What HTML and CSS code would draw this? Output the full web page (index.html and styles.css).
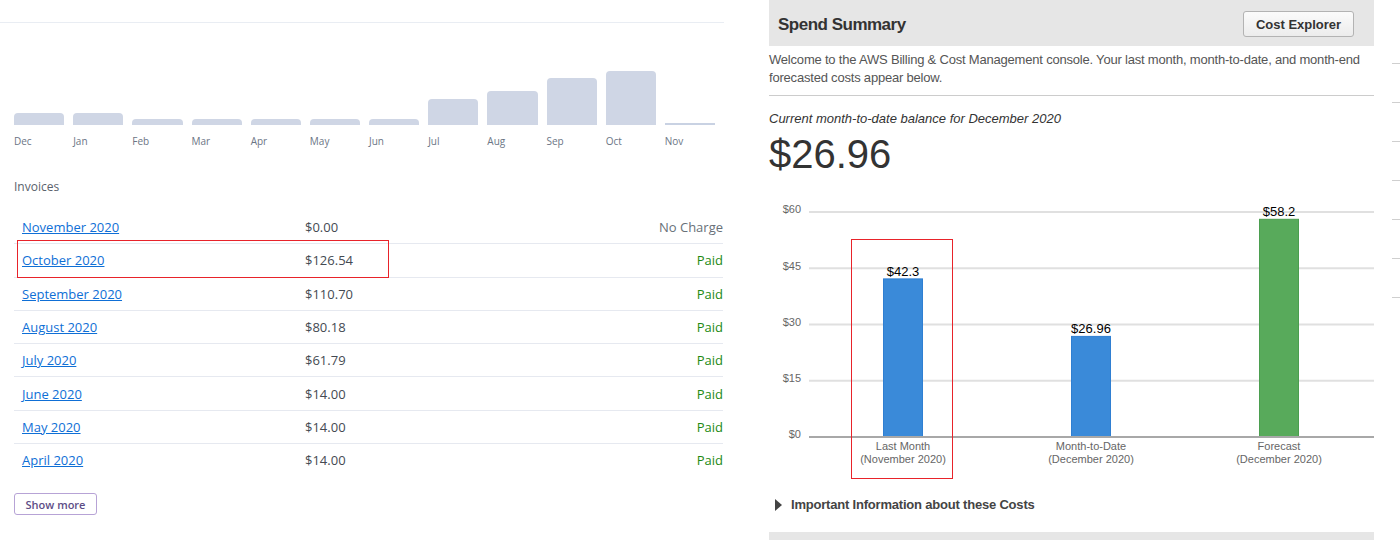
FILE: index.html
```html
<!DOCTYPE html>
<html>
<head>
<meta charset="utf-8">
<link rel="stylesheet" href="styles.css">
</head>
<body>
<div class="page">
  <section class="billing">
    <div class="top-rule"></div>
    <div class="spark">
      <div class="spark-col"><div class="spark-bar" style="height:12px"></div><span>Dec</span></div>
      <div class="spark-col"><div class="spark-bar" style="height:12px"></div><span>Jan</span></div>
      <div class="spark-col"><div class="spark-bar" style="height:6px"></div><span>Feb</span></div>
      <div class="spark-col"><div class="spark-bar" style="height:6px"></div><span>Mar</span></div>
      <div class="spark-col"><div class="spark-bar" style="height:6px"></div><span>Apr</span></div>
      <div class="spark-col"><div class="spark-bar" style="height:6px"></div><span>May</span></div>
      <div class="spark-col"><div class="spark-bar" style="height:6px"></div><span>Jun</span></div>
      <div class="spark-col"><div class="spark-bar" style="height:26px"></div><span>Jul</span></div>
      <div class="spark-col"><div class="spark-bar" style="height:34px"></div><span>Aug</span></div>
      <div class="spark-col"><div class="spark-bar" style="height:47px"></div><span>Sep</span></div>
      <div class="spark-col"><div class="spark-bar" style="height:54px"></div><span>Oct</span></div>
      <div class="spark-col"><div class="spark-bar spark-zero" style="height:2px"></div><span>Nov</span></div>
    </div>
    <h3 class="inv-title">Invoices</h3>
    <div class="inv-table">
      <div class="inv-row"><a href="#">November 2020</a><span class="amt">$0.00</span><span class="st nocharge">No Charge</span></div>
      <div class="inv-row highlighted"><a href="#">October 2020</a><span class="amt">$126.54</span><span class="st paid">Paid</span><div class="mark"></div></div>
      <div class="inv-row"><a href="#">September 2020</a><span class="amt">$110.70</span><span class="st paid">Paid</span></div>
      <div class="inv-row"><a href="#">August 2020</a><span class="amt">$80.18</span><span class="st paid">Paid</span></div>
      <div class="inv-row"><a href="#">July 2020</a><span class="amt">$61.79</span><span class="st paid">Paid</span></div>
      <div class="inv-row"><a href="#">June 2020</a><span class="amt">$14.00</span><span class="st paid">Paid</span></div>
      <div class="inv-row"><a href="#">May 2020</a><span class="amt">$14.00</span><span class="st paid">Paid</span></div>
      <div class="inv-row"><a href="#">April 2020</a><span class="amt">$14.00</span><span class="st paid">Paid</span></div>
    </div>
    <button class="show-more">Show more</button>
  </section>

  <section class="spend">
    <div class="spend-head">
      <h2>Spend Summary</h2>
      <button class="ce-btn">Cost Explorer</button>
    </div>
    <p class="welcome">Welcome to the AWS Billing &amp; Cost Management console. Your last month, month-to-date, and month-end forecasted costs appear below.</p>
    <div class="divider"></div>
    <p class="caption">Current month-to-date balance for December 2020</p>
    <div class="balance">$26.96</div>
    <svg class="chart" width="605" height="280" viewBox="0 0 605 280">
      <g class="grid">
        <line x1="40" y1="12" x2="605" y2="12"/>
        <line x1="40" y1="68.3" x2="605" y2="68.3"/>
        <line x1="40" y1="124.5" x2="605" y2="124.5"/>
        <line x1="40" y1="180.8" x2="605" y2="180.8"/>
      </g>
      <g class="ylabels">
        <text x="32" y="13">$60</text>
        <text x="32" y="70">$45</text>
        <text x="32" y="126">$30</text>
        <text x="32" y="182">$15</text>
        <text x="32" y="238">$0</text>
      </g>
      <rect class="bar-blue" x="114.5" y="78.9" width="39" height="158.1"/>
      <rect class="bar-blue" x="302.5" y="136.4" width="39" height="100.6"/>
      <rect class="bar-green" x="490.5" y="19.3" width="39" height="217.7"/>
      <line class="base" x1="40" y1="237" x2="605" y2="237"/>
      <g class="vlabels">
        <text x="134" y="76">$42.3</text>
        <text x="322" y="133">$26.96</text>
        <text x="510" y="16">$58.2</text>
      </g>
      <g class="xlabels">
        <text x="134" y="250">Last Month</text>
        <text x="134" y="263">(November 2020)</text>
        <text x="322" y="250">Month-to-Date</text>
        <text x="322" y="263">(December 2020)</text>
        <text x="510" y="250">Forecast</text>
        <text x="510" y="263">(December 2020)</text>
      </g>
      <rect class="annot" x="82.5" y="39.5" width="101" height="239"/>
    </svg>
    <div class="info"><span class="tri"></span>Important Information about these Costs</div>
    <div class="next-head"></div>
  </section>

  <div class="ticks">
    <i></i><i></i><i></i><i></i><i></i><i></i><i></i>
  </div>
</div>
</body>
</html>
```

FILE: styles.css
```css
html, body {
  margin: 0;
  padding: 0;
  background: #ffffff;
  overflow: hidden;
}
.page {
  display: flex;
  align-items: flex-start;
  width: 1400px;
  height: 540px;
}

/* ---------- Left: billing ---------- */
.billing {
  width: 724px;
  flex: none;
  font-family: "Open Sans", "Noto Sans", sans-serif;
}
.top-rule {
  height: 22px;
  border-bottom: 1px solid #e9edf3;
}
.spark {
  display: grid;
  grid-template-columns: repeat(12, 1fr);
  column-gap: 9px;
  margin-left: 14px;
  width: 701px;
}
.spark-col {
  display: flex;
  flex-direction: column;
  align-items: stretch;
  height: 125px;
}
.spark-col::before {
  content: "";
  flex: 1;
}
.spark-bar {
  flex: none;
  background: #cfd6e5;
  border-radius: 4px 4px 0 0;
}
.spark-zero {
  border-radius: 0;
  background: #c9d2e3;
}
.spark-col span {
  flex: none;
  height: 23px;
  font-size: 10px;
  line-height: 14px;
  padding-top: 9px;
  box-sizing: border-box;
  color: #6b7585;
  text-align: left;
}
.inv-title {
  margin: 31px 0 0 14px;
  font-size: 12px;
  line-height: 16px;
  font-weight: 400;
  color: #5a626c;
}
.inv-table {
  margin: 16px 0 0 14px;
  width: 709px;
}
.inv-row {
  position: relative;
  display: grid;
  grid-template-columns: 283px 1fr auto;
  align-items: center;
  height: 32.3px;
  padding-left: 8px;
  border-bottom: 1px solid #e6e9f0;
  font-size: 13px;
}
.inv-row:last-child {
  border-bottom: none;
}
.inv-row a {
  color: #0f6fd6;
  text-decoration: underline;
  justify-self: start;
}
.amt {
  color: #444a52;
}
.st.paid {
  color: #1d8a13;
}
.st.nocharge {
  color: #687078;
}
.mark {
  position: absolute;
  left: 3px;
  top: -4px;
  width: 370px;
  height: 36px;
  border: 1px solid #e8232a;
}
.show-more {
  display: block;
  margin: 17px 0 0 14px;
  width: 83px;
  height: 22px;
  padding: 0;
  background: #ffffff;
  border: 1px solid #b7a3d6;
  border-radius: 3px;
  font-family: "Open Sans", "Noto Sans", sans-serif;
  font-size: 11px;
  font-weight: 600;
  color: #5d4d86;
}

/* ---------- Right: spend summary ---------- */
.spend {
  width: 605px;
  flex: none;
  margin-left: 45px;
  font-family: "Liberation Sans", Arial, sans-serif;
}
.spend-head {
  display: flex;
  align-items: center;
  justify-content: space-between;
  height: 46px;
  padding: 3px 20px 0 9px;
  box-sizing: border-box;
  background: #e6e6e6;
}
.spend-head h2 {
  margin: 0;
  font-size: 17px;
  font-weight: 700;
  letter-spacing: -0.5px;
  color: #333333;
}
.ce-btn {
  width: 111px;
  height: 26px;
  margin-top: -1px;
  padding: 0;
  background: linear-gradient(#fbfbfb, #ececec);
  border: 1px solid #b3b3b3;
  border-radius: 3px;
  font-family: "Liberation Sans", Arial, sans-serif;
  font-size: 13px;
  font-weight: 700;
  color: #333333;
}
.welcome {
  margin: 5px 0 0;
  font-size: 13px;
  line-height: 18px;
  letter-spacing: -0.2px;
  color: #555555;
}
.divider {
  margin-top: 8px;
  border-top: 1px solid #cccccc;
}
.caption {
  margin: 15px 0 0;
  font-size: 13px;
  line-height: 16px;
  font-style: italic;
  color: #333333;
}
.balance {
  margin-top: 4px;
  font-size: 40px;
  line-height: 46px;
  color: #333333;
}
.chart {
  display: block;
  margin-top: 23px;
  overflow: visible;
}
.grid line {
  stroke: #e0e0e0;
  stroke-width: 2;
}
.base {
  stroke: #a8a8a8;
  stroke-width: 2;
}
.ylabels text {
  font-family: "Liberation Sans", Arial, sans-serif;
  font-size: 11px;
  fill: #666666;
  text-anchor: end;
}
.bar-blue {
  fill: #3a8ad9;
  stroke: #2f7fd2;
  stroke-width: 1;
}
.bar-green {
  fill: #58aa5b;
  stroke: #4b9e4f;
  stroke-width: 1;
}
.vlabels text {
  font-family: "Liberation Sans", Arial, sans-serif;
  font-size: 13px;
  fill: #000000;
  text-anchor: middle;
}
.xlabels text {
  font-family: "Liberation Sans", Arial, sans-serif;
  font-size: 11px;
  fill: #666666;
  text-anchor: middle;
}
.annot {
  fill: none;
  stroke: #e8232a;
  stroke-width: 1;
}
.info {
  display: flex;
  align-items: center;
  margin-top: 16px;
  padding-left: 6px;
  font-size: 13px;
  line-height: 18px;
  font-weight: 700;
  letter-spacing: -0.2px;
  color: #444444;
}
.tri {
  width: 0;
  height: 0;
  border-top: 6px solid transparent;
  border-bottom: 6px solid transparent;
  border-left: 7px solid #444444;
  margin-right: 9px;
}
.next-head {
  margin-top: 18px;
  height: 20px;
  background: #e6e6e6;
}

/* ---------- Far right ticks ---------- */
.ticks {
  display: flex;
  flex-direction: column;
  gap: 38px;
  margin-left: 18px;
  padding-top: 63px;
  width: 8px;
}
.ticks i {
  display: block;
  height: 1px;
  background: #cfcfcf;
}
```
